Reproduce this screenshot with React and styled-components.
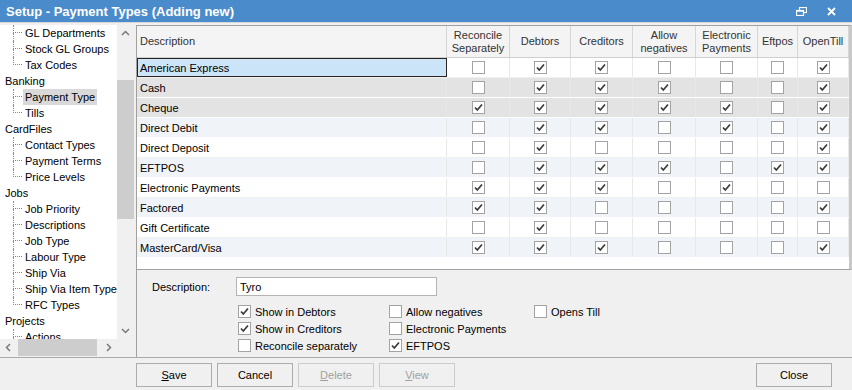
import React from "react"
import styled, { createGlobalStyle } from "styled-components"

const GlobalStyle = createGlobalStyle`
	html, body {
		margin: 0;
		padding: 0;
		background: #f0f0f0;
	}
	body {
		font-family: "Liberation Sans", Arial, sans-serif;
		font-size: 11px;
		color: #000;
	}
	* {
		box-sizing: border-box;
	}
`

const columns = [
	{ key: "reconcile", label: ["Reconcile", "Separately"], width: 63 },
	{ key: "debtors", label: ["Debtors"], width: 61 },
	{ key: "creditors", label: ["Creditors"], width: 62 },
	{ key: "negatives", label: ["Allow", "negatives"], width: 63 },
	{ key: "electronic", label: ["Electronic", "Payments"], width: 62 },
	{ key: "eftpos", label: ["Eftpos"], width: 40 },
	{ key: "till", label: ["OpenTill"], width: 51 },
]

const rows = [
	{ name: "American Express", checks: [0, 1, 1, 0, 0, 0, 1], tone: "white", selected: true },
	{ name: "Cash", checks: [0, 1, 1, 1, 0, 0, 1], tone: "grey" },
	{ name: "Cheque", checks: [1, 1, 1, 1, 1, 0, 1], tone: "grey" },
	{ name: "Direct Debit", checks: [0, 1, 1, 0, 1, 0, 1], tone: "alt" },
	{ name: "Direct Deposit", checks: [0, 1, 0, 0, 0, 0, 1], tone: "white" },
	{ name: "EFTPOS", checks: [0, 1, 1, 1, 0, 1, 1], tone: "alt" },
	{ name: "Electronic Payments", checks: [1, 1, 1, 0, 1, 0, 0], tone: "white" },
	{ name: "Factored", checks: [1, 1, 0, 0, 0, 0, 1], tone: "alt" },
	{ name: "Gift Certificate", checks: [0, 1, 0, 0, 0, 0, 0], tone: "white" },
	{ name: "MasterCard/Visa", checks: [1, 1, 1, 0, 0, 0, 1], tone: "alt" },
]

const tree = [
	{ label: "GL Departments", child: true },
	{ label: "Stock GL Groups", child: true },
	{ label: "Tax Codes", child: true, last: true },
	{ label: "Banking" },
	{ label: "Payment Type", child: true, selected: true },
	{ label: "Tills", child: true, last: true },
	{ label: "CardFiles" },
	{ label: "Contact Types", child: true },
	{ label: "Payment Terms", child: true },
	{ label: "Price Levels", child: true, last: true },
	{ label: "Jobs" },
	{ label: "Job Priority", child: true },
	{ label: "Descriptions", child: true },
	{ label: "Job Type", child: true },
	{ label: "Labour Type", child: true },
	{ label: "Ship Via", child: true },
	{ label: "Ship Via Item Types", child: true },
	{ label: "RFC Types", child: true, last: true },
	{ label: "Projects" },
	{ label: "Actions", child: true },
]

const toneColors = {
	white: "#ffffff",
	grey: "#e3e3e3",
	alt: "#f0f3f8",
}

const Check = ({ checked }) => (
	<Box>
		{checked ? (
			<svg width="11" height="11" viewBox="0 0 11 11">
				<path d="M2 5.5 L4.3 8 L9 2.5" fill="none" stroke="#3a3a3a" strokeWidth="1.7" />
			</svg>
		) : null}
	</Box>
)

const Chevron = ({ dir }) => {
	const points = {
		up: "1,6 4.5,2.5 8,6",
		down: "1,3 4.5,6.5 8,3",
		left: "6,1 2.5,4.5 6,8",
		right: "3,1 6.5,4.5 3,8",
	}
	return (
		<svg width="9" height="9" viewBox="0 0 9 9">
			<polyline points={points[dir]} fill="none" stroke="#7a7a7a" strokeWidth="1.5" />
		</svg>
	)
}

const App = () => {
	return (
		<Window>
			<GlobalStyle />
			<TitleBar>
				<Title>Setup - Payment Types (Adding new)</Title>
				<TitleControls>
					<svg width="11" height="9" viewBox="0 0 11 9">
						<rect x="3.5" y="0.5" width="7" height="5" fill="none" stroke="#fff" strokeWidth="1.2" />
						<rect x="0.5" y="3.5" width="7" height="5" fill="#4a8bcb" stroke="#fff" strokeWidth="1.2" />
						<line x1="0.5" y1="4" x2="7.5" y2="4" stroke="#fff" strokeWidth="1.5" />
					</svg>
					<svg width="9" height="9" viewBox="0 0 9 9">
						<path d="M1 1 L8 8 M8 1 L1 8" stroke="#fff" strokeWidth="1.8" />
					</svg>
				</TitleControls>
			</TitleBar>

			<Body>
				<LeftPanel>
					<TreeArea>
						<TreeList>
							{tree.map(item => (
								<TreeRow key={item.label} child={item.child}>
									{item.child ? (
										<Connector>
											<ConnectorTop />
											<ConnectorBottom last={item.last} />
										</Connector>
									) : null}
									<TreeLabel selected={item.selected}>{item.label}</TreeLabel>
								</TreeRow>
							))}
						</TreeList>
						<VScroll>
							<ArrowBox><Chevron dir="up" /></ArrowBox>
							<VTrack>
								<VThumb />
							</VTrack>
							<ArrowBox><Chevron dir="down" /></ArrowBox>
						</VScroll>
					</TreeArea>
					<HScroll>
						<ArrowBox><Chevron dir="left" /></ArrowBox>
						<HTrack>
							<HThumb />
						</HTrack>
						<ArrowBox><Chevron dir="right" /></ArrowBox>
						<Corner />
					</HScroll>
				</LeftPanel>

				<RightPanel>
					<Grid>
						<HeaderRow>
							<HeaderCell align="left" width={310}>Description</HeaderCell>
							{columns.map(col => (
								<HeaderCell key={col.key} width={col.width}>
									{col.label.map(line => (
										<span key={line}>{line}</span>
									))}
								</HeaderCell>
							))}
						</HeaderRow>
						{rows.map(row => (
							<DataRow key={row.name} tone={row.tone}>
								<NameCell selected={row.selected}>{row.name}</NameCell>
								{row.checks.map((c, i) => (
									<CheckCell key={columns[i].key} width={columns[i].width}>
										<Check checked={c} />
									</CheckCell>
								))}
							</DataRow>
						))}
					</Grid>

					<Form>
						<FieldRow>
							<FieldLabel>Description:</FieldLabel>
							<TextInput>Tyro</TextInput>
						</FieldRow>
						<Options>
							<Option><Check checked /> Show in Debtors</Option>
							<Option><Check checked /> Show in Creditors</Option>
							<Option><Check /> Reconcile separately</Option>
							<Option><Check /> Allow negatives</Option>
							<Option><Check /> Electronic Payments</Option>
							<Option><Check checked /> EFTPOS</Option>
							<Option><Check /> Opens Till</Option>
						</Options>
					</Form>
				</RightPanel>
			</Body>

			<Footer>
				<Button><u>S</u>ave</Button>
				<Button>Cancel</Button>
				<Button disabled><u>D</u>elete</Button>
				<Button disabled><u>V</u>iew</Button>
				<Button push>Close</Button>
			</Footer>
		</Window>
	)
}

const Window = styled.div`
	width: 852px;
	height: 390px;
	display: flex;
	flex-direction: column;
	overflow: hidden;
	background: #f0f0f0;
`

const TitleBar = styled.div`
	height: 22px;
	flex-shrink: 0;
	background: #4a8bcb;
	display: flex;
	align-items: center;
	padding: 0 16px 0 6px;
`

const Title = styled.div`
	color: #fff;
	font-weight: bold;
	font-size: 13px;
	flex: 1;
`

const TitleControls = styled.div`
	display: flex;
	align-items: center;
	gap: 20px;
`

const Body = styled.div`
	flex: 1;
	display: flex;
	min-height: 0;
	padding-top: 2px;
	border-top: 1px solid #d8d8d8;
`

const LeftPanel = styled.div`
	width: 134px;
	margin-right: 2px;
	display: flex;
	flex-direction: column;
`

const TreeArea = styled.div`
	height: 314px;
	display: flex;
`

const TreeList = styled.div`
	flex: 1;
	background: #fff;
	overflow: hidden;
`

const TreeRow = styled.div`
	height: 16px;
	display: flex;
	align-items: center;
	white-space: nowrap;
	padding-left: ${props => (props.child ? "13px" : "3px")};
	font-size: 11px;
`

const Connector = styled.div`
	width: 9px;
	height: 16px;
	margin-right: 1px;
	display: flex;
	flex-direction: column;
	flex-shrink: 0;
`

const ConnectorTop = styled.div`
	height: 8px;
	border-left: 1px dotted #8a8a8a;
	border-bottom: 1px dotted #8a8a8a;
`

const ConnectorBottom = styled.div`
	height: 8px;
	border-left: ${props => (props.last ? "none" : "1px dotted #8a8a8a")};
`

const TreeLabel = styled.span`
	padding: 0 2px;
	line-height: 16px;
	background: ${props => (props.selected ? "#d9d9d9" : "transparent")};
`

const VScroll = styled.div`
	width: 17px;
	background: #f0f0f0;
	display: flex;
	flex-direction: column;
`

const ArrowBox = styled.div`
	width: 17px;
	height: 17px;
	flex-shrink: 0;
	display: flex;
	align-items: center;
	justify-content: center;
`

const VTrack = styled.div`
	flex: 1;
	padding-top: 38px;
`

const VThumb = styled.div`
	height: 139px;
	background: #cdcdcd;
`

const HScroll = styled.div`
	height: 17px;
	display: flex;
	background: #f0f0f0;
`

const HTrack = styled.div`
	width: 83px;
	padding-left: 1px;
	display: flex;
	align-items: stretch;
`

const HThumb = styled.div`
	width: 79px;
	background: #cdcdcd;
`

const Corner = styled.div`
	width: 17px;
	background: #f0f0f0;
`

const RightPanel = styled.div`
	flex: 1;
	display: flex;
	flex-direction: column;
	min-width: 0;
`

const Grid = styled.div`
	height: 245px;
	flex-shrink: 0;
	background: #fff;
	border: 1px solid #a0a0a0;
	border-right-width: 3px;
	border-right-color: #c8c8c8;
	overflow: hidden;
`

const HeaderRow = styled.div`
	display: flex;
	height: 32px;
	background: #f4f4f4;
	border-bottom: 1px solid #cfcfcf;
`

const HeaderCell = styled.div`
	width: ${props => props.width}px;
	flex-shrink: 0;
	display: flex;
	flex-direction: column;
	justify-content: center;
	align-items: ${props => (props.align === "left" ? "flex-start" : "center")};
	padding-left: ${props => (props.align === "left" ? "3px" : "0")};
	border-right: 1px solid #d6d6d6;
	color: #333;
	font-size: 11px;
	line-height: 13px;
	text-align: center;
`

const DataRow = styled.div`
	display: flex;
	height: 20px;
	background: ${props => toneColors[props.tone]};
	border-bottom: 1px solid ${props => (props.tone === "white" ? "#f0f0f0" : "#ffffff")};
`

const NameCell = styled.div`
	width: 310px;
	flex-shrink: 0;
	display: flex;
	align-items: center;
	padding-left: 2px;
	font-size: 11px;
	background: ${props => (props.selected ? "#cce4f7" : "transparent")};
	border: 1px solid ${props => (props.selected ? "#2a2320" : "transparent")};
	border-right-color: ${props => (props.selected ? "#2a2320" : "#e8e8e8")};
`

const CheckCell = styled.div`
	width: ${props => props.width}px;
	flex-shrink: 0;
	display: flex;
	align-items: center;
	justify-content: center;
	border-right: 1px solid #e8e8e8;
`

const Box = styled.span`
	width: 13px;
	height: 13px;
	flex-shrink: 0;
	display: inline-flex;
	align-items: center;
	justify-content: center;
	background: #fff;
	border: 1px solid #a3a3a3;
`

const Form = styled.div`
	flex: 1;
	border-left: 1px solid #a0a0a0;
	padding: 7px 0 0 15px;
`

const FieldRow = styled.div`
	display: flex;
	align-items: center;
	height: 19px;
`

const FieldLabel = styled.div`
	width: 84px;
	font-size: 11px;
`

const TextInput = styled.div`
	width: 201px;
	height: 19px;
	background: #fff;
	border: 1px solid #b4b4b4;
	padding-left: 3px;
	display: flex;
	align-items: center;
	font-size: 11px;
`

const Options = styled.div`
	display: grid;
	grid-template-rows: repeat(3, 17px);
	grid-auto-flow: column;
	grid-template-columns: 151px 145px auto;
	margin: 7px 0 0 86px;
`

const Option = styled.div`
	display: flex;
	align-items: center;
	gap: 4px;
	font-size: 11px;
	white-space: nowrap;
`

const Footer = styled.div`
	height: 33px;
	flex-shrink: 0;
	border-top: 1px solid #a9a9a9;
	display: flex;
	gap: 5px;
	padding: 5px 20px 0 136px;
`

const Button = styled.button`
	width: 76px;
	height: 24px;
	margin-left: ${props => (props.push ? "auto" : "0")};
	background: #f0f0f0;
	border: 1px solid ${props => (props.disabled ? "#cccccc" : "#adadad")};
	color: ${props => (props.disabled ? "#a0a0a0" : "#000")};
	font-family: "Liberation Sans", Arial, sans-serif;
	font-size: 11px;
	padding: 0;
`

export default App
